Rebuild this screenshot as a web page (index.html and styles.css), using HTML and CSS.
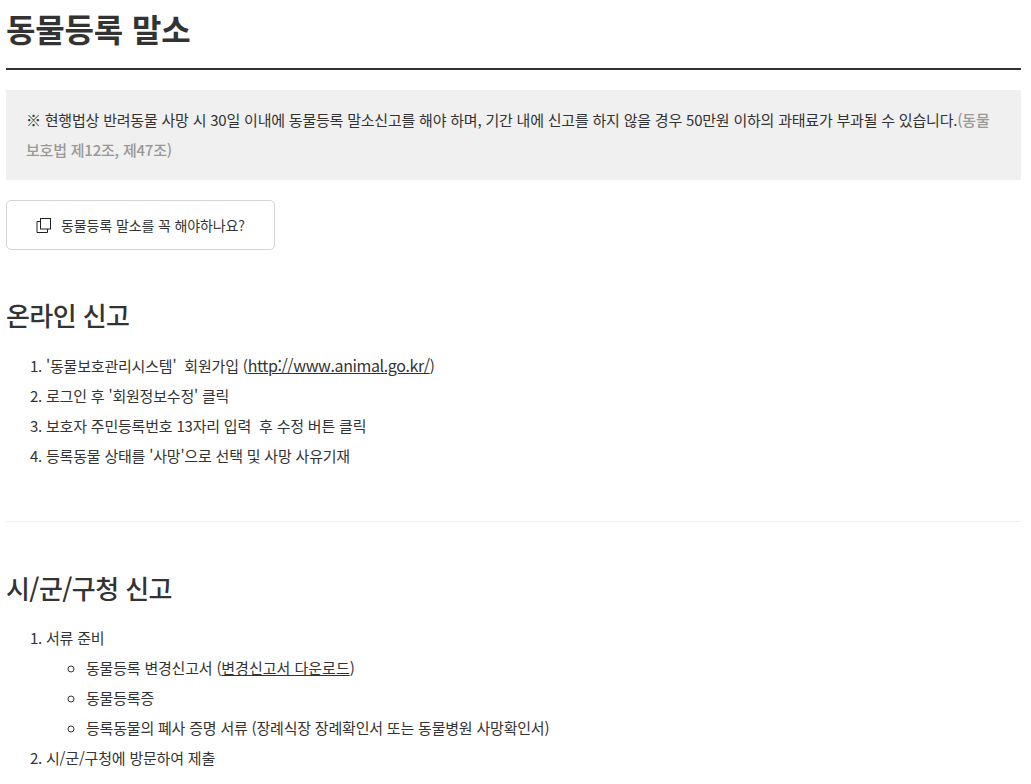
FILE: index.html
```html
<!DOCTYPE html>
<html lang="ko">
<head>
<meta charset="utf-8">
<title>동물등록 말소</title>
<link rel="stylesheet" href="styles.css">
</head>
<body>
<main class="page">
  <h1 class="title">동물등록 말소</h1>
  <div class="notice">※ 현행법상 반려동물 사망 시 30일 이내에 동물등록 말소신고를 해야 하며, 기간 내에 신고를 하지 않을 경우 50만원 이하의 과태료가 부과될 수 있습니다.<span class="law">(동물보호법 제12조, 제47조)</span></div>
  <a class="faq" href="#">
    <svg class="faq-icon" width="15" height="15" viewBox="0 0 15 15" fill="none" stroke="#222" stroke-width="1"><rect x="4.5" y="0.5" width="10" height="10.5"/><path d="M4.5 3.5H1V14.5H11.5V11"/></svg>
    <span>동물등록 말소를 꼭 해야하나요?</span>
  </a>
  <h2 class="section-title">온라인 신고</h2>
  <ol class="steps">
    <li>'동물보호관리시스템'&nbsp; 회원가입 (<a class="url" href="#">http://www.animal.go.kr/</a>)</li>
    <li>로그인 후 '회원정보수정' 클릭</li>
    <li>보호자 주민등록번호 13자리 입력&nbsp; 후 수정 버튼 클릭</li>
    <li>등록동물 상태를 '사망'으로 선택 및 사망 사유기재</li>
  </ol>
  <hr class="divider">
  <h2 class="section-title">시/군/구청 신고</h2>
  <ol class="steps">
    <li>서류 준비
      <ul class="sub">
        <li>동물등록 변경신고서 (<a href="#">변경신고서 다운로드</a>)</li>
        <li>동물등록증</li>
        <li>등록동물의 폐사 증명 서류 (장례식장 장례확인서 또는 동물병원 사망확인서)</li>
      </ul>
    </li>
    <li>시/군/구청에 방문하여 제출</li>
  </ol>
</main>
</body>
</html>
```
FILE: styles.css
```css
html, body {
  margin: 0;
  padding: 0;
  background: #fff;
  overflow: hidden;
}
body {
  height: 784px;
  font-family: "Noto Sans CJK KR", "Noto Sans", sans-serif;
  color: #333;
  font-size: 15px;
  line-height: 30px;
  letter-spacing: -0.2px;
}
.page {
  padding: 0 10px 0 6px;
}
.title {
  margin: 0;
  height: 68px;
  border-bottom: 2px solid #333;
  font-size: 32px;
  line-height: 57px;
  font-weight: 700;
  letter-spacing: -0.15px;
}
.notice {
  margin-top: 20px;
  padding: 15px 20px;
  background: #f0f0f0;
  letter-spacing: -0.21px;
}
.law {
  color: #999;
  font-weight: 500;
}
.faq {
  display: flex;
  align-items: center;
  justify-content: center;
  gap: 10px;
  box-sizing: border-box;
  width: 269px;
  height: 50px;
  margin-top: 20px;
  border: 1px solid #d5d5d5;
  border-radius: 5px;
  color: #333;
  font-size: 14px;
  letter-spacing: -0.12px;
  text-decoration: none;
}
.section-title {
  margin: 45px 0 0;
  font-size: 26px;
  line-height: 40px;
  font-weight: 500;
  letter-spacing: -0.6px;
}
.steps {
  margin: 15px 0 0;
  padding: 0 0 0 40px;
}
.steps a {
  color: #333;
  text-decoration: underline;
  letter-spacing: 0;
}
.steps .url {
  font-size: 16px;
  letter-spacing: -0.4px;
}
.sub {
  margin: 0;
  padding: 0 0 0 40px;
  list-style: circle;
}
.divider {
  height: 1px;
  margin: 50px 0 0;
  border: 0;
  background: #eee;
}
.divider + .section-title {
  margin-top: 46px;
}
```
